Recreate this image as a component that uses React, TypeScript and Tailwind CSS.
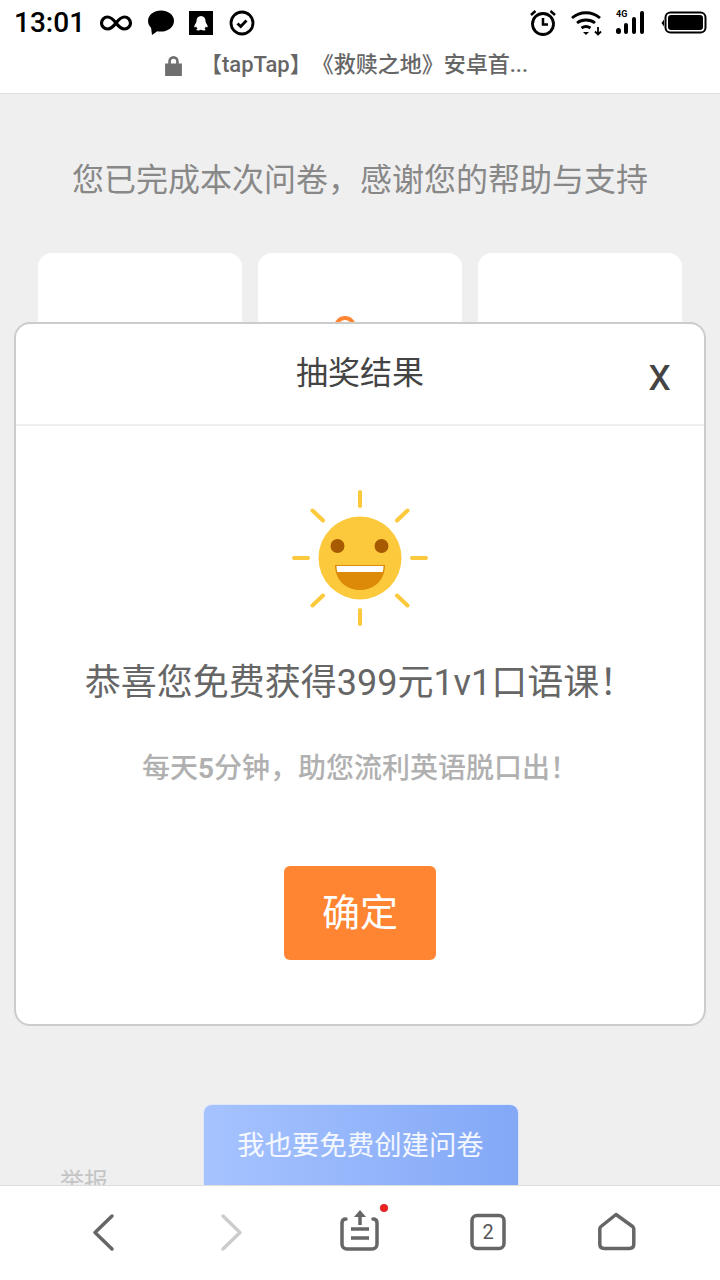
import React from 'react'

const StatusIcons = () => (
  <div className="flex items-center">
    <svg width="34" height="20" viewBox="0 0 34 20" className="ml-[14px]" fill="none" stroke="#000" strokeWidth="3.2">
      <path d="M17 10c-3-4-5-6-8.500-6a6 6 0 0 0 0 12c3.500 0 5.500-2 8.500-6s5-6 8.500-6a6 6 0 0 1 0 12c-3.500 0-5.500-2-8.500-6z" />
    </svg>
    <svg width="28" height="26" viewBox="0 0 28 26" className="ml-[14px]">
      <ellipse cx="14" cy="11" rx="13" ry="10.500" fill="#000" />
      <path d="M4 17l1 8 7-5z" fill="#000" />
    </svg>
    <svg width="24" height="24" viewBox="0 0 24 24" className="ml-[14px]">
      <rect width="24" height="24" fill="#000" />
      <path d="M12 5c-3 0-4.500 2.200-4.500 5 0 1-.5 2-1.500 3.500-1 1.700-.8 3 0 3l1.200-1c.3 1 .8 1.800 1.300 2.300-1 .5-1.500 1.200-.7 1.500 1.500.4 3-.2 4.200-.6 1.200.4 2.700 1 4.200.6.800-.3.300-1-.7-1.500.5-.5 1-1.300 1.300-2.300l1.200 1c.8 0 1-1.300 0-3-1-1.500-1.500-2.500-1.500-3.500 0-2.800-1.500-5-4.500-5z" fill="#fff" />
    </svg>
    <svg width="26" height="26" viewBox="0 0 26 26" className="ml-[16px]" fill="none" stroke="#000">
      <circle cx="13" cy="13" r="11" strokeWidth="2.800" />
      <path d="M8.500 13.500l3.200 3 5.800-6" strokeWidth="2.800" />
    </svg>
  </div>
)

const SystemIcons = () => (
  <div className="flex items-center">
    <svg width="28" height="28" viewBox="0 0 28 28" fill="none" stroke="#000">
      <circle cx="14" cy="15" r="10.500" strokeWidth="2.800" />
      <path d="M14 9v6.500h5" strokeWidth="2.500" />
      <path d="M2 6l4.500-4M26 6l-4.500-4" strokeWidth="2.500" />
    </svg>
    <svg width="32" height="26" viewBox="0 0 32 26" className="ml-[14px]" fill="none" stroke="#000" strokeWidth="2.800">
      <path d="M1 8c8-7 20-7 28 0M6 13c5-4 13-4 18 0M10.500 18c3-2 6-2 9 0" />
      <path d="M12 22h6l-3 3z" fill="#000" stroke="none" />
      <path d="M27 17v7M24 21.500l3 3 3-3" strokeWidth="1.800" />
    </svg>
    <div className="relative w-[32px] h-[26px] ml-[13px]">
      <span className="absolute left-0 top-[-1px] text-[9px] leading-[10px] font-bold text-black">4G</span>
      <svg width="32" height="26" viewBox="0 0 32 26" fill="#000">
        <rect x="0" y="18" width="5" height="6" rx="2.500" />
        <rect x="8" y="13" width="4" height="11" rx="2" />
        <rect x="16" y="7" width="4" height="17" rx="2" />
        <rect x="24" y="1" width="4" height="23" rx="2" />
      </svg>
    </div>
    <svg width="46" height="26" viewBox="0 0 46 26" className="ml-[13px]">
      <path d="M3 9.500v7L.5 13z" fill="#000" />
      <rect x="4.500" y="2.500" width="40" height="20" rx="5" fill="none" stroke="#000" strokeWidth="2" />
      <rect x="7" y="5" width="35" height="15" rx="3" fill="#000" />
    </svg>
  </div>
)

const Sun = () => (
  <svg width="136" height="136" viewBox="0 0 136 136">
    <g stroke="#fdc93c" strokeWidth="4" strokeLinecap="round">
      <path d="M68 2v14M68 120v14M2 68h14M120 68h14" />
      <path d="M20.500 20.500l10.500 10M115.500 20.500l-10.500 10M20.500 115.500l10.500-10M115.500 115.500l-10.500-10" />
    </g>
    <circle cx="68" cy="68" r="41.500" fill="#fdc93c" />
    <circle cx="45.500" cy="56" r="7" fill="#a85a00" />
    <circle cx="89.500" cy="56" r="7" fill="#a85a00" />
    <path d="M43 75h50c0 15-11 25-25 25s-25-10-25-25z" fill="#dc8a08" />
    <path d="M44.500 76h47c0 2-.3 4-.8 6H45.300c-.5-2-.8-4-.8-6z" fill="#fff" />
  </svg>
)

const BottomNav = () => (
  <div className="h-[95px] bg-white border-t border-[#dddddd] relative shrink-0">
    <svg width="720" height="94" viewBox="0 0 720 94" fill="none" strokeLinecap="round" strokeLinejoin="round">
      <path d="M112 30L95 46.500 112 63" stroke="#666" strokeWidth="3.500" />
      <path d="M223 30l17 16.500L223 63" stroke="#cccccc" strokeWidth="3.500" />
      <path d="M346 33c-3 0-4 2-4 4v21c0 3 2 5 5 5h25c3 0 5-2 5-5V37c0-2-1-4-4-4" stroke="#666" strokeWidth="3.500" />
      <path d="M360 24l-6 7h12z" fill="#666" />
      <path d="M360 30v9" stroke="#666" strokeWidth="3.500" strokeLinecap="butt" />
      <path d="M351 43h18M351 52h18" stroke="#666" strokeWidth="3.500" strokeLinecap="butt" />
      <rect x="472" y="29.500" width="32" height="33" rx="5" stroke="#666" strokeWidth="3.500" />
      <path d="M616 28.500l-15 12c-.8.700-1.200 1.500-1.200 2.500v15c0 3 2 4.500 4.500 4.500h25c2.500 0 4.500-1.500 4.500-4.500V43c0-1-.4-1.800-1.200-2.500z" stroke="#666" strokeWidth="3.500" />
      <circle cx="384" cy="22" r="4" fill="#e62222" />
    </svg>
    <span className="absolute left-[472px] top-[29px] w-[32px] h-[34px] flex items-center justify-center text-[20px] text-[#555] font-['Roboto',sans-serif]">2</span>
  </div>
)

const App = () => (
  <div className="w-[720px] h-[1280px] overflow-hidden flex flex-col bg-white font-['Roboto','Noto_Sans_CJK_SC',sans-serif]">
    <header className="h-[94px] bg-white border-b border-[#dedede] flex flex-col shrink-0">
      <div className="h-[46px] pl-[14px] pr-[13px] flex items-center justify-between">
        <div className="flex items-center">
          <span className="text-[28px] leading-none font-medium text-black">13:01</span>
          <StatusIcons />
        </div>
        <SystemIcons />
      </div>
      <div className="flex items-center justify-center h-[38px] pr-[27px]">
        <svg width="17" height="21" viewBox="0 0 16 20" fill="#6f6f6f">
          <path d="M3 8V6a5 5 0 0 1 10 0v2h3v12H0V8zm2.500 0h5V6a2.500 2.500 0 0 0-5 0z" />
        </svg>
        <span className="ml-[18px] text-[22px] leading-none font-medium text-[#666] [text-spacing-trim:space-all]">【tapTap】《救赎之地》安卓首...</span>
      </div>
    </header>

    <main className="relative flex-1 overflow-hidden bg-[#efefef]">
      <h1 className="mt-[65px] text-center text-[32px] leading-[42px] font-normal text-[#888]">
        您已完成本次问卷，感谢您的帮助与支持
      </h1>
      <div className="mt-[52px] px-[38px] grid grid-cols-3 gap-[16px]">
        <div className="h-[300px] bg-white rounded-[14px]" />
        <div className="h-[300px] bg-white rounded-[14px] flex justify-center pt-[63px]">
          <div className="w-[22px] h-[22px] -ml-[30px] rounded-full border-4 border-[#ff8533]" />
        </div>
        <div className="h-[300px] bg-white rounded-[14px]" />
      </div>
      <div className="mt-[552px] pl-[1px] flex justify-center">
        <button className="w-[314px] h-[90px] pb-[6px] rounded-[8px] shadow-[0_0_0_1px_#dfe8fb] bg-gradient-to-r from-[#a6c3ff] to-[#83a8f6] text-[27.400px] text-white/90">
          我也要免费创建问卷
        </button>
      </div>
      <span className="absolute left-[60px] top-[1072px] text-[24px] leading-[32px] text-[#c4c4c4]">举报</span>

      <section className="absolute left-[14px] top-[228px] w-[692px] h-[704px] bg-white border-2 border-[#cccccc] rounded-[16px] flex flex-col items-center">
        <div className="relative w-full h-[102px] border-b-2 border-[#eeeeee] flex items-center justify-center shrink-0">
          <h2 className="text-[32px] leading-none pb-[3px] font-normal text-[#444]">抽奖结果</h2>
          <span className="absolute right-[33px] top-[24px] text-[46px] leading-[52px] text-[#444]">x</span>
        </div>
        <div className="mt-[64px]"><Sun /></div>
        <p className="mt-[34px] text-[36px] leading-[46px] text-[#666]">恭喜您免费获得399元1v1口语课！</p>
        <p className="mt-[44px] text-[28px] leading-[38px] font-medium text-[#b0b0b0]">每天<b>5</b>分钟，助您流利英语脱口出！</p>
        <button className="mt-[78px] w-[152px] h-[94px] rounded-[6px] bg-[#ff8533] text-[38px] text-white">确定</button>
      </section>
    </main>

    <BottomNav />
  </div>
)

export default App
